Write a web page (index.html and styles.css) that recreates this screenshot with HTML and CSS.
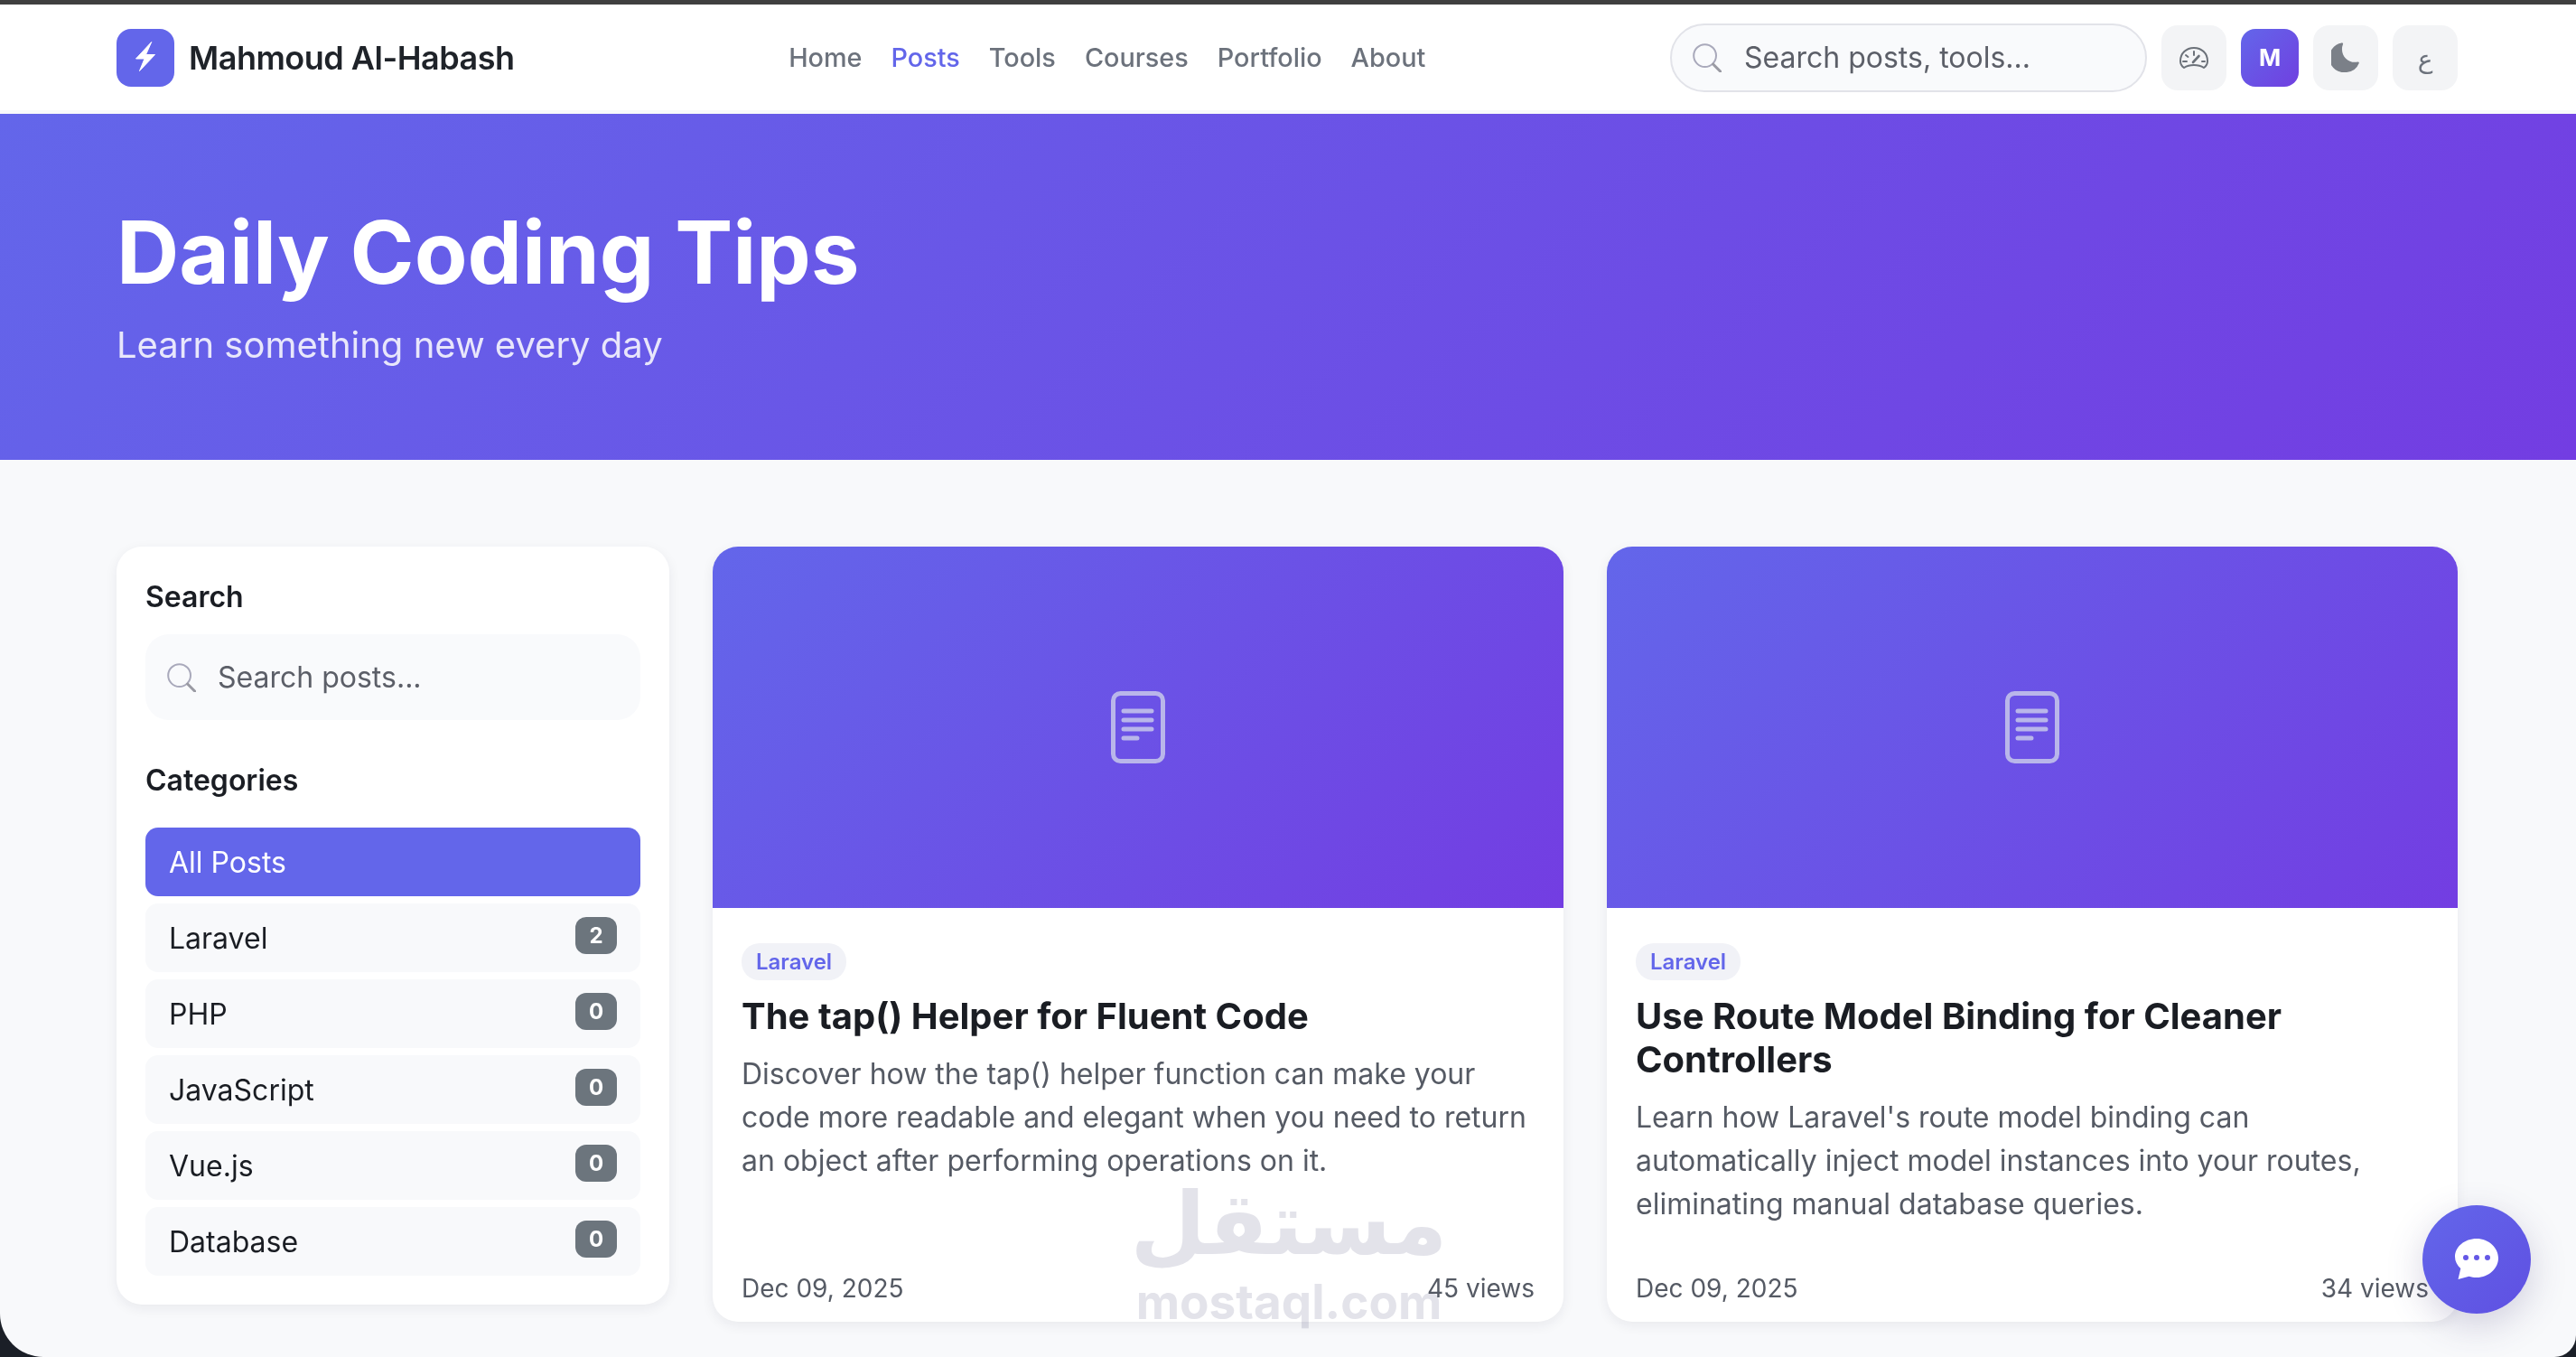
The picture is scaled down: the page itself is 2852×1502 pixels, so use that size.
FILE: index.html
```html
<!DOCTYPE html>
<html lang="en">
<head>
    <meta charset="UTF-8">
    <meta name="viewport" content="width=device-width, initial-scale=1.0">
    <title>Daily Coding Tips - Mahmoud Al-Habash</title>
    <link rel="stylesheet" href="styles.css">
</head>
<body>
    <div class="window">
        <!-- Top navigation -->
        <header class="navbar">
            <div class="navbar-inner">
                <a class="brand" href="#">
                    <span class="brand-icon">
                        <svg viewBox="0 0 64 64" width="64" height="64" fill="#fff" stroke="#fff" stroke-width="1" stroke-linejoin="round"><path d="M38.700 14.500 21.500 33H31l-5.500 13.500L42.500 28.500H32.500z"/></svg>
                    </span>
                    <span class="brand-name">Mahmoud Al-Habash</span>
                </a>
                <nav class="nav-links">
                    <a class="nav-link" href="#">Home</a>
                    <a class="nav-link active" href="#">Posts</a>
                    <a class="nav-link" href="#">Tools</a>
                    <a class="nav-link" href="#">Courses</a>
                    <a class="nav-link" href="#">Portfolio</a>
                    <a class="nav-link" href="#">About</a>
                </nav>
                <div class="nav-actions">
                    <label class="nav-search">
                        <svg class="search-icon" viewBox="0 0 16 16" width="32" height="32" fill="none"><circle cx="6.800" cy="6.800" r="6.200" stroke="#a9a9bb" stroke-width="1"/><path d="m11.300 11.500 4 4" stroke="#9a9aa3" stroke-width="1.500" stroke-linecap="round"/></svg>
                        <input type="text" placeholder="Search posts, tools...">
                    </label>
                    <button class="icon-btn">
                        <svg viewBox="0 0 32 24" width="32" height="24" fill="none" stroke="#6b7179" stroke-width="2" stroke-linecap="round" stroke-linejoin="round"><path d="M5 23C2 21 1 18 1 15.500 1 7 7.500 1 16 1s15 6 15 14.500c0 2.500-1 5.500-4 7.500-3-2-7-3-11-3S8 21 5 23z"/><path d="M16 5v4M7 9l2.500 2M4 16h4M25 16h3"/><path d="M15 17l6.500-7" stroke-width="2.600"/></svg>
                    </button>
                    <span class="avatar">M</span>
                    <button class="icon-btn">
                        <svg viewBox="0 0 16 16" width="33" height="33" fill="#7b8088"><path d="M6.200.4a.6.6 0 0 1 .1.600A6.900 6.900 0 0 0 5.800 3.700c0 3.800 3.100 6.900 6.900 6.900.5 0 1-.1 1.500-.2a.6.6 0 0 1 .7.800A7.700 7.700 0 0 1 8.300 16 7.700 7.700 0 0 1 5.600.2a.6.6 0 0 1 .6.200z"/></svg>
                    </button>
                    <button class="icon-btn lang-btn">ع</button>
                </div>
            </div>
        </header>

        <!-- Page hero -->
        <section class="hero">
            <div class="hero-inner">
                <h1 class="hero-title">Daily Coding Tips</h1>
                <p class="hero-subtitle">Learn something new every day</p>
            </div>
        </section>

        <main class="content">
            <!-- Sidebar -->
            <aside class="sidebar">
                <h2 class="sidebar-title">Search</h2>
                <label class="sidebar-search">
                    <svg class="search-icon" viewBox="0 0 16 16" width="32" height="32" fill="none"><circle cx="6.800" cy="6.800" r="6.200" stroke="#a9a9bb" stroke-width="1"/><path d="m11.300 11.500 4 4" stroke="#9a9aa3" stroke-width="1.500" stroke-linecap="round"/></svg>
                    <input type="text" placeholder="Search posts...">
                </label>
                <h2 class="sidebar-title categories-title">Categories</h2>
                <ul class="category-list">
                    <li class="category-item active"><span>All Posts</span></li>
                    <li class="category-item"><span>Laravel</span><span class="count">2</span></li>
                    <li class="category-item"><span>PHP</span><span class="count">0</span></li>
                    <li class="category-item"><span>JavaScript</span><span class="count">0</span></li>
                    <li class="category-item"><span>Vue.js</span><span class="count">0</span></li>
                    <li class="category-item"><span>Database</span><span class="count">0</span></li>
                </ul>
            </aside>

            <!-- Post cards -->
            <article class="post-card">
                <div class="post-cover">
                    <svg viewBox="0 0 60 80" width="60" height="80" fill="none" stroke="#b9b6ea" stroke-width="5"><rect x="2.500" y="2.500" width="55" height="75" rx="8"/><path d="M14 22h31M14 32h31M14 42h31M14 52h15" stroke-linecap="round"/></svg>
                </div>
                <div class="post-body">
                    <span class="post-tag">Laravel</span>
                    <h3 class="post-title">The tap() Helper for Fluent Code</h3>
                    <p class="post-excerpt">Discover how the tap() helper function can make your code more readable and elegant when you need to return an object after performing operations on it.</p>
                    <div class="post-meta"><span>Dec 09, 2025</span><span>45 views</span></div>
                </div>
            </article>

            <article class="post-card">
                <div class="post-cover">
                    <svg viewBox="0 0 60 80" width="60" height="80" fill="none" stroke="#b9b6ea" stroke-width="5"><rect x="2.500" y="2.500" width="55" height="75" rx="8"/><path d="M14 22h31M14 32h31M14 42h31M14 52h15" stroke-linecap="round"/></svg>
                </div>
                <div class="post-body">
                    <span class="post-tag">Laravel</span>
                    <h3 class="post-title">Use Route Model Binding for Cleaner Controllers</h3>
                    <p class="post-excerpt">Learn how Laravel's route model binding can automatically inject model instances into your routes, eliminating manual database queries.</p>
                    <div class="post-meta"><span>Dec 09, 2025</span><span>34 views</span></div>
                </div>
            </article>
        </main>

        <!-- Overlays: watermark and chat button -->
        <div class="watermark">
            <span class="watermark-ar" lang="ar" dir="rtl">مستقل</span>
            <span class="watermark-en">mostaql.com</span>
        </div>
        <button class="chat-btn">
            <svg viewBox="0 0 48 46" width="48" height="46"><path d="M24 0C10.700 0 0 9 0 20c0 5 2.400 9.500 6.300 13L3.500 45l12-3.300c2.800.9 5.400 1.300 8.500 1.300 13.300 0 24-10 24-21.500S37.300 0 24 0z" fill="#fff"/><circle cx="12" cy="21" r="3" fill="#6558e6"/><circle cx="24" cy="21" r="3" fill="#6558e6"/><circle cx="36" cy="21" r="3" fill="#6558e6"/></svg>
        </button>
    </div>
</body>
</html>
```

FILE: styles.css
```css
* {
    margin: 0;
    padding: 0;
    box-sizing: border-box;
}

html, body {
    height: 100%;
    overflow: hidden;
}

body {
    background-color: #1b1f27;
    font-family: Inter, "Noto Sans", sans-serif;
    color: #1a1d23;
}

a {
    text-decoration: none;
    color: inherit;
}

button {
    border: none;
    font-family: inherit;
}

input {
    border: none;
    outline: none;
    background: transparent;
    font-family: inherit;
    flex: 1;
    min-width: 0;
}

input::placeholder {
    color: #5c5f68;
    opacity: 1;
}

.window {
    position: relative;
    height: 1502px;
    background-color: #f8f9fb;
    border-top: 5px solid #3f3f3f;
    border-radius: 0 0 24px 48px;
    overflow: hidden;
}

/* Navbar */
.navbar {
    height: 117px;
    background-color: #fff;
    margin-bottom: 4px;
}

.navbar-inner {
    height: 100%;
    padding: 0 131px 0 129px;
    display: flex;
    align-items: center;
    justify-content: space-between;
}

.brand {
    display: flex;
    align-items: center;
    gap: 16px;
}

.brand-icon {
    width: 64px;
    height: 64px;
    border-radius: 16px;
    background-color: #6366ea;
    display: flex;
    align-items: center;
    justify-content: center;
}

.brand-name {
    font-size: 36px;
    font-weight: 600;
    letter-spacing: -0.5px;
    color: #1f2329;
}

.nav-links {
    display: flex;
    margin-left: 33px;
}

.nav-link {
    padding: 0 16px;
    font-size: 28.8px;
    font-weight: 500;
    color: #6c727c;
}

.nav-link.active {
    color: #6366ea;
}

.nav-actions {
    display: flex;
    align-items: center;
    gap: 16px;
}

.nav-search {
    width: 528px;
    height: 76px;
    display: flex;
    align-items: center;
    gap: 25px;
    padding: 0 23px;
    background-color: #f9fafc;
    border: 2px solid #e2e3e9;
    border-radius: 38px;
}

.nav-search input {
    font-size: 32px;
}

.icon-btn {
    width: 72px;
    height: 72px;
    border-radius: 18px;
    background-color: #f3f4f6;
    display: flex;
    align-items: center;
    justify-content: center;
}

.lang-btn {
    padding-top: 4px;
    font-family: "DejaVu Sans", sans-serif;
    font-size: 28px;
    color: #6c727c;
}

.avatar {
    width: 64px;
    height: 64px;
    border-radius: 16px;
    background: linear-gradient(135deg, #6366ea, #7040e0);
    color: #fff;
    font-size: 26px;
    font-weight: 700;
    display: flex;
    align-items: center;
    justify-content: center;
}

/* Hero */
.hero {
    height: 383px;
    background: linear-gradient(135deg, #6366ea 0%, #733de2 100%);
    color: #fff;
    display: flex;
    align-items: center;
}

.hero-inner {
    padding: 0 129px 7px;
}

.hero-title {
    font-size: 96px;
    font-weight: 700;
    line-height: 1.2;
    margin-bottom: 20px;
}

.hero-subtitle {
    font-size: 40px;
    opacity: 0.85;
}

/* Main layout */
.content {
    padding: 96px 131px 0 129px;
    display: grid;
    grid-template-columns: 612px 942px 942px;
    gap: 48px;
    align-items: start;
}

/* Sidebar */
.sidebar {
    background-color: #fff;
    border-radius: 28px;
    padding: 32px;
    box-shadow: 0 4px 14px rgba(30, 30, 60, 0.07);
}

.sidebar-title {
    font-size: 32px;
    font-weight: 600;
    line-height: 48px;
    margin-bottom: 17px;
}

.categories-title {
    margin-top: 43px;
    margin-bottom: 28px;
}

.sidebar-search {
    height: 95px;
    display: flex;
    align-items: center;
    gap: 24px;
    padding: 0 24px;
    background-color: #f9fafc;
    border-radius: 26px;
}

.sidebar-search input {
    font-size: 32px;
}

.category-list {
    list-style: none;
    display: flex;
    flex-direction: column;
    gap: 8px;
}

.category-item {
    height: 76px;
    padding: 0 26px;
    background-color: #f8f9fb;
    border-radius: 14px;
    font-size: 32px;
    display: flex;
    align-items: center;
    justify-content: space-between;
}

.category-item.active {
    background-color: #6366ea;
    color: #fff;
}

.count {
    min-width: 46px;
    height: 41px;
    margin-bottom: 5px;
    border-radius: 12px;
    background-color: #6c757d;
    color: #fff;
    font-size: 24px;
    font-weight: 700;
    display: flex;
    align-items: center;
    justify-content: center;
}

/* Post cards */
.post-card {
    height: 858px;
    background-color: #fff;
    border-radius: 28px;
    overflow: hidden;
    box-shadow: 0 4px 14px rgba(30, 30, 60, 0.07);
    display: flex;
    flex-direction: column;
}

.post-cover {
    height: 400px;
    background: linear-gradient(135deg, #6366ea 0%, #733de2 100%);
    display: flex;
    align-items: center;
    justify-content: center;
    flex-shrink: 0;
}

.post-body {
    flex: 1;
    padding: 39px 32px 20px;
    display: flex;
    flex-direction: column;
    align-items: flex-start;
}

.post-tag {
    height: 41px;
    padding: 0 16px;
    border-radius: 20px;
    background-color: #f1f2f7;
    color: #6366ea;
    font-size: 24px;
    font-weight: 600;
    display: flex;
    align-items: center;
}

.post-title {
    margin-top: 16px;
    font-size: 40px;
    font-weight: 700;
    line-height: 48px;
    color: #1a1d23;
}

.post-excerpt {
    margin-top: 16px;
    font-size: 32px;
    line-height: 48px;
    color: #555a64;
}

.post-meta {
    margin-top: auto;
    width: 100%;
    display: flex;
    justify-content: space-between;
    font-size: 28px;
    color: #555a64;
}

/* Overlays */
.watermark {
    position: absolute;
    left: 1255px;
    top: 1300px;
    width: 344px;
    display: flex;
    flex-direction: column;
    align-items: center;
    color: #e3e3ea;
    font-weight: 700;
    mix-blend-mode: multiply;
    pointer-events: none;
}

.watermark-ar {
    font-family: "DejaVu Sans", sans-serif;
    font-size: 96px;
    line-height: 100px;
}

.watermark-en {
    margin-top: 5px;
    font-size: 53px;
    line-height: 62px;
}

.chat-btn {
    position: absolute;
    left: 2682px;
    top: 1329px;
    width: 120px;
    height: 120px;
    border-radius: 50%;
    background: linear-gradient(135deg, #6366ea, #5f50e2);
    box-shadow: 0 12px 40px rgba(70, 60, 120, 0.22);
    display: flex;
    align-items: center;
    justify-content: center;
}
```
